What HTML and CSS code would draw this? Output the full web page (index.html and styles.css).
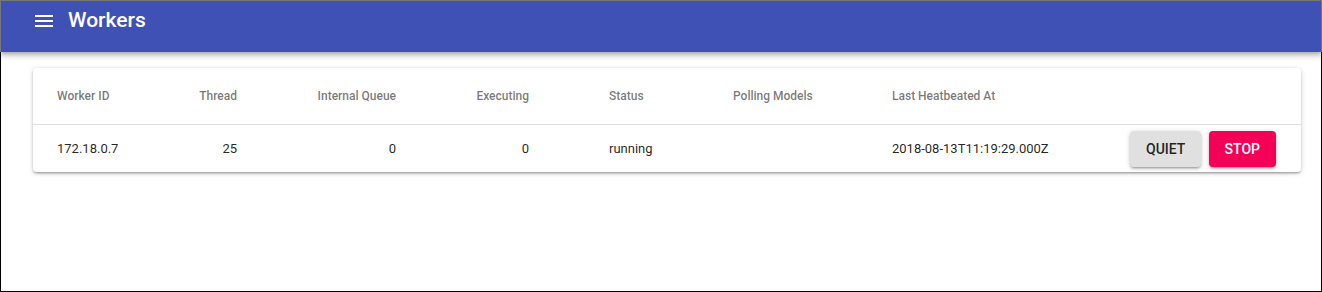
FILE: index.html
```html
<!DOCTYPE html>
<html lang="en">
<head>
    <meta charset="UTF-8">
    <meta name="viewport" content="width=device-width, initial-scale=1.0">
    <title>Workers</title>
    <link rel="stylesheet" href="styles.css">
</head>
<body>
    <div class="frame">
        <header class="appbar">
            <svg class="menu-icon" width="24" height="24" viewBox="0 0 24 24">
                <path d="M3 18h18v-2H3v2zm0-5h18v-2H3v2zm0-7v2h18V6H3z" fill="#fff"/>
            </svg>
            <h1 class="title">Workers</h1>
        </header>

        <main class="content">
            <div class="card">
                <table class="workers">
                    <colgroup>
                        <col style="width: 140px">
                        <col style="width: 120px">
                        <col style="width: 159px">
                        <col style="width: 133px">
                        <col style="width: 124px">
                        <col style="width: 159px">
                        <col style="width: 233px">
                        <col style="width: 200px">
                    </colgroup>
                    <thead>
                        <tr>
                            <th>Worker ID</th>
                            <th class="num">Thread</th>
                            <th class="num">Internal Queue</th>
                            <th class="num">Executing</th>
                            <th>Status</th>
                            <th>Polling Models</th>
                            <th>Last Heatbeated At</th>
                            <th class="actions"></th>
                        </tr>
                    </thead>
                    <tbody>
                        <tr>
                            <td>172.18.0.7</td>
                            <td class="num">25</td>
                            <td class="num">0</td>
                            <td class="num">0</td>
                            <td>running</td>
                            <td></td>
                            <td>2018-08-13T11:19:29.000Z</td>
                            <td class="actions">
                                <button class="btn btn-default">Quiet</button>
                                <button class="btn btn-secondary">Stop</button>
                            </td>
                        </tr>
                    </tbody>
                </table>
            </div>
        </main>
    </div>
</body>
</html>
```

FILE: styles.css
```css
body { margin: 0; font-family: Roboto, "Liberation Sans", sans-serif; background: #fff; }
.frame { height: 292px; border: 1px solid #000; box-sizing: border-box; }

.appbar { display: flex; align-items: flex-start; height: 52px; box-sizing: border-box; margin: -1px -1px 0; padding-left: 31px; background: #3f51b5; border: 1px solid #777; border-bottom: none; box-shadow: 0 2px 4px -1px rgba(0,0,0,0.2), 0 4px 5px 0 rgba(0,0,0,0.14), 0 1px 10px 0 rgba(0,0,0,0.12); }
.menu-icon { display: block; margin-top: 8px; }
.title { margin: 7px 0 0 12px; font-size: 21px; line-height: 24px; font-weight: 500; color: #fff; }

.content { padding: 16px 20px 0 32px; }
.card { background: #fff; border-radius: 4px; box-shadow: 0 1px 5px 0 rgba(0,0,0,0.2), 0 2px 2px 0 rgba(0,0,0,0.14), 0 3px 1px -2px rgba(0,0,0,0.12); }

.workers { width: 100%; table-layout: fixed; border-collapse: collapse; }
.workers th, .workers td { padding: 0 56px 0 24px; text-align: left; border-bottom: 1px solid #e0e0e0; white-space: nowrap; }
.workers th { height: 56px; font-size: 12px; font-weight: 500; color: rgba(0,0,0,0.54); }
.workers td { height: 47px; font-size: 13px; color: rgba(0,0,0,0.87); }
.workers tbody tr:last-child td { border-bottom: none; }
.workers .num { text-align: right; }
.workers .actions { padding: 0 25px 0 0; text-align: right; }

.btn { height: 36px; min-width: 64px; padding: 0 16px; margin-left: 4px; border: none; border-radius: 4px; font-family: inherit; font-size: 14px; font-weight: 500; text-transform: uppercase; box-shadow: 0 1px 5px 0 rgba(0,0,0,0.2), 0 2px 2px 0 rgba(0,0,0,0.14), 0 3px 1px -2px rgba(0,0,0,0.12); vertical-align: middle; }
.btn-default { background: #e0e0e0; color: rgba(0,0,0,0.87); }
.btn-secondary { background: #f50057; color: #fff; }
```
